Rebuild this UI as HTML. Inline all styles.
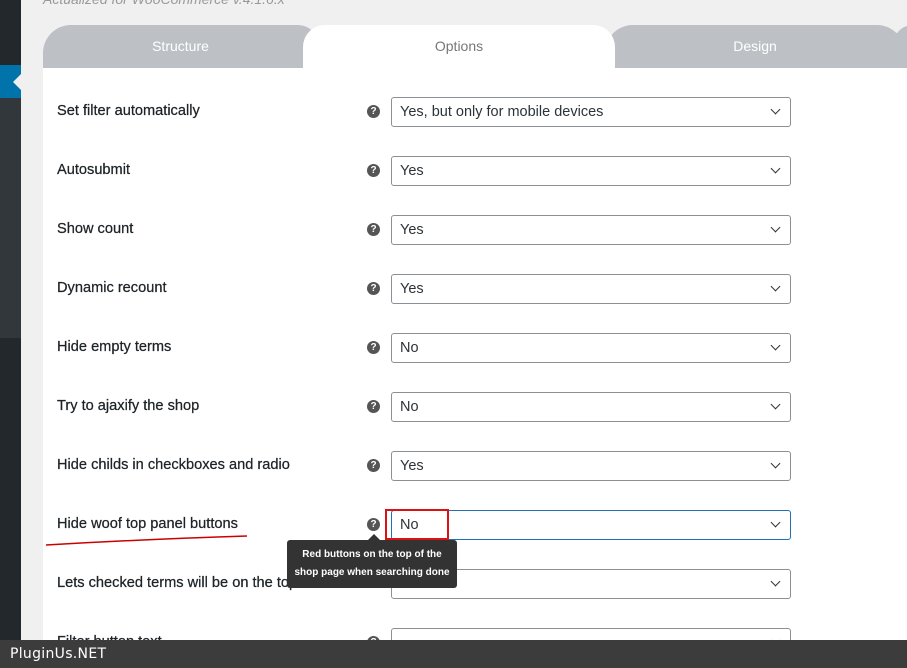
<!DOCTYPE html><html><head><style>
body{margin:0;width:907px;height:668px;overflow:hidden;background:#f0f0f1;font-family:"Liberation Sans",sans-serif;position:relative}
.sb{position:absolute;left:0;top:0;width:21px;height:668px;background:#23282d}
.sb2{position:absolute;left:0;top:98px;width:21px;height:240px;background:#32373c}
.sbh{position:absolute;left:0;top:65px;width:21px;height:33px;background:#0073aa}
.sbh:after{content:"";position:absolute;left:13px;top:9px;border:8px solid transparent;border-right-color:#f0f0f1;border-left:0}
.top{position:absolute;left:43px;top:-9px;color:#999;font-style:italic;font-size:14px}
.panel{position:absolute;left:43px;top:68px;width:864px;height:600px;background:#fff}
.tab{position:absolute;top:25px;height:43px;background:#bdc1c6;color:#fff;font-size:14px;text-align:center;line-height:42px;border-radius:28px 28px 0 0}
.row{position:absolute;left:57px;font-size:14.6px;color:#1d2327;-webkit-text-stroke:0.25px #1d2327}
.q{position:absolute;left:367px;width:13px;height:13px;border-radius:50%;background:#555;color:#fff;font-size:10px;font-weight:bold;text-align:center;line-height:13px}
.sel{position:absolute;left:391px;width:398px;height:28px;border:1px solid #8c8f94;border-radius:3px;background:#fff;font-size:14.5px;color:#2c3338;line-height:28px;text-indent:8px}
.sel:after{content:"";position:absolute;right:11px;top:8px;width:6px;height:6px;border-right:1.5px solid #333;border-bottom:1.5px solid #333;transform:rotate(45deg)}
.bar{position:absolute;left:0;top:640px;width:907px;height:28px;background:#3c3c3c;color:#fff;font-size:14px;line-height:28px;text-indent:10px;font-family:"DejaVu Sans",sans-serif;letter-spacing:0.3px}
</style></head><body>
<div class="sb"></div><div class="sb2"></div><div class="sbh"></div>
<div class="top">Actualized for WooCommerce v.4.1.6.x</div>
<div class="panel"></div>
<div class="tab" style="left:43px;width:275px;border-radius:28px 20px 0 0">Structure</div>
<div class="tab" style="left:605px;width:300px">Design</div>
<div class="tab" style="left:893px;width:40px"></div>
<div class="tab" style="left:303px;width:312px;background:#fff;color:#777;border-radius:22px 22px 0 0">Options</div>
<div class="row" style="top:103px">Set filter automatically</div><div class="q" style="top:105px">?</div><div class="sel" style="top:97px">Yes, but only for mobile devices</div>
<div class="row" style="top:162px">Autosubmit</div><div class="q" style="top:164px">?</div><div class="sel" style="top:156px">Yes</div>
<div class="row" style="top:221px">Show count</div><div class="q" style="top:223px">?</div><div class="sel" style="top:215px">Yes</div>
<div class="row" style="top:280px">Dynamic recount</div><div class="q" style="top:282px">?</div><div class="sel" style="top:274px">Yes</div>
<div class="row" style="top:339px">Hide empty terms</div><div class="q" style="top:341px">?</div><div class="sel" style="top:333px">No</div>
<div class="row" style="top:398px">Try to ajaxify the shop</div><div class="q" style="top:400px">?</div><div class="sel" style="top:392px">No</div>
<div class="row" style="top:457px">Hide childs in checkboxes and radio</div><div class="q" style="top:459px">?</div><div class="sel" style="top:451px">Yes</div>
<div class="row" style="top:516px">Hide woof top panel buttons</div><div class="q" style="top:518px">?</div><div class="sel" style="top:510px;border-color:#2271b1">No</div>
<div class="row" style="top:575px">Lets checked terms will be on the top</div><div class="sel" style="top:569px"></div>
<div class="row" style="top:634px">Filter button text</div><div class="q" style="top:636px">?</div><div class="sel" style="top:628px"></div>
<div style="position:absolute;left:385px;top:509px;width:60px;height:27px;border:2px solid #d11"></div>
<svg style="position:absolute;left:0;top:0" width="907" height="668"><path d="M46 545 Q150 539 247 536" stroke="#c00" stroke-width="1.5" fill="none"/></svg>
<div style="position:absolute;left:287px;top:540px;width:170px;height:48px;background:#333;border-radius:3px;color:#fff;font-size:10px;font-weight:bold;text-align:center;line-height:18px;padding-top:6px;box-sizing:border-box">Red buttons on the top of the<br>shop page when searching done</div>
<div style="position:absolute;left:368px;top:534px;border:6px solid transparent;border-bottom-color:#333;border-top:0"></div>
<div class="bar">PluginUs.NET</div>
</body></html>
